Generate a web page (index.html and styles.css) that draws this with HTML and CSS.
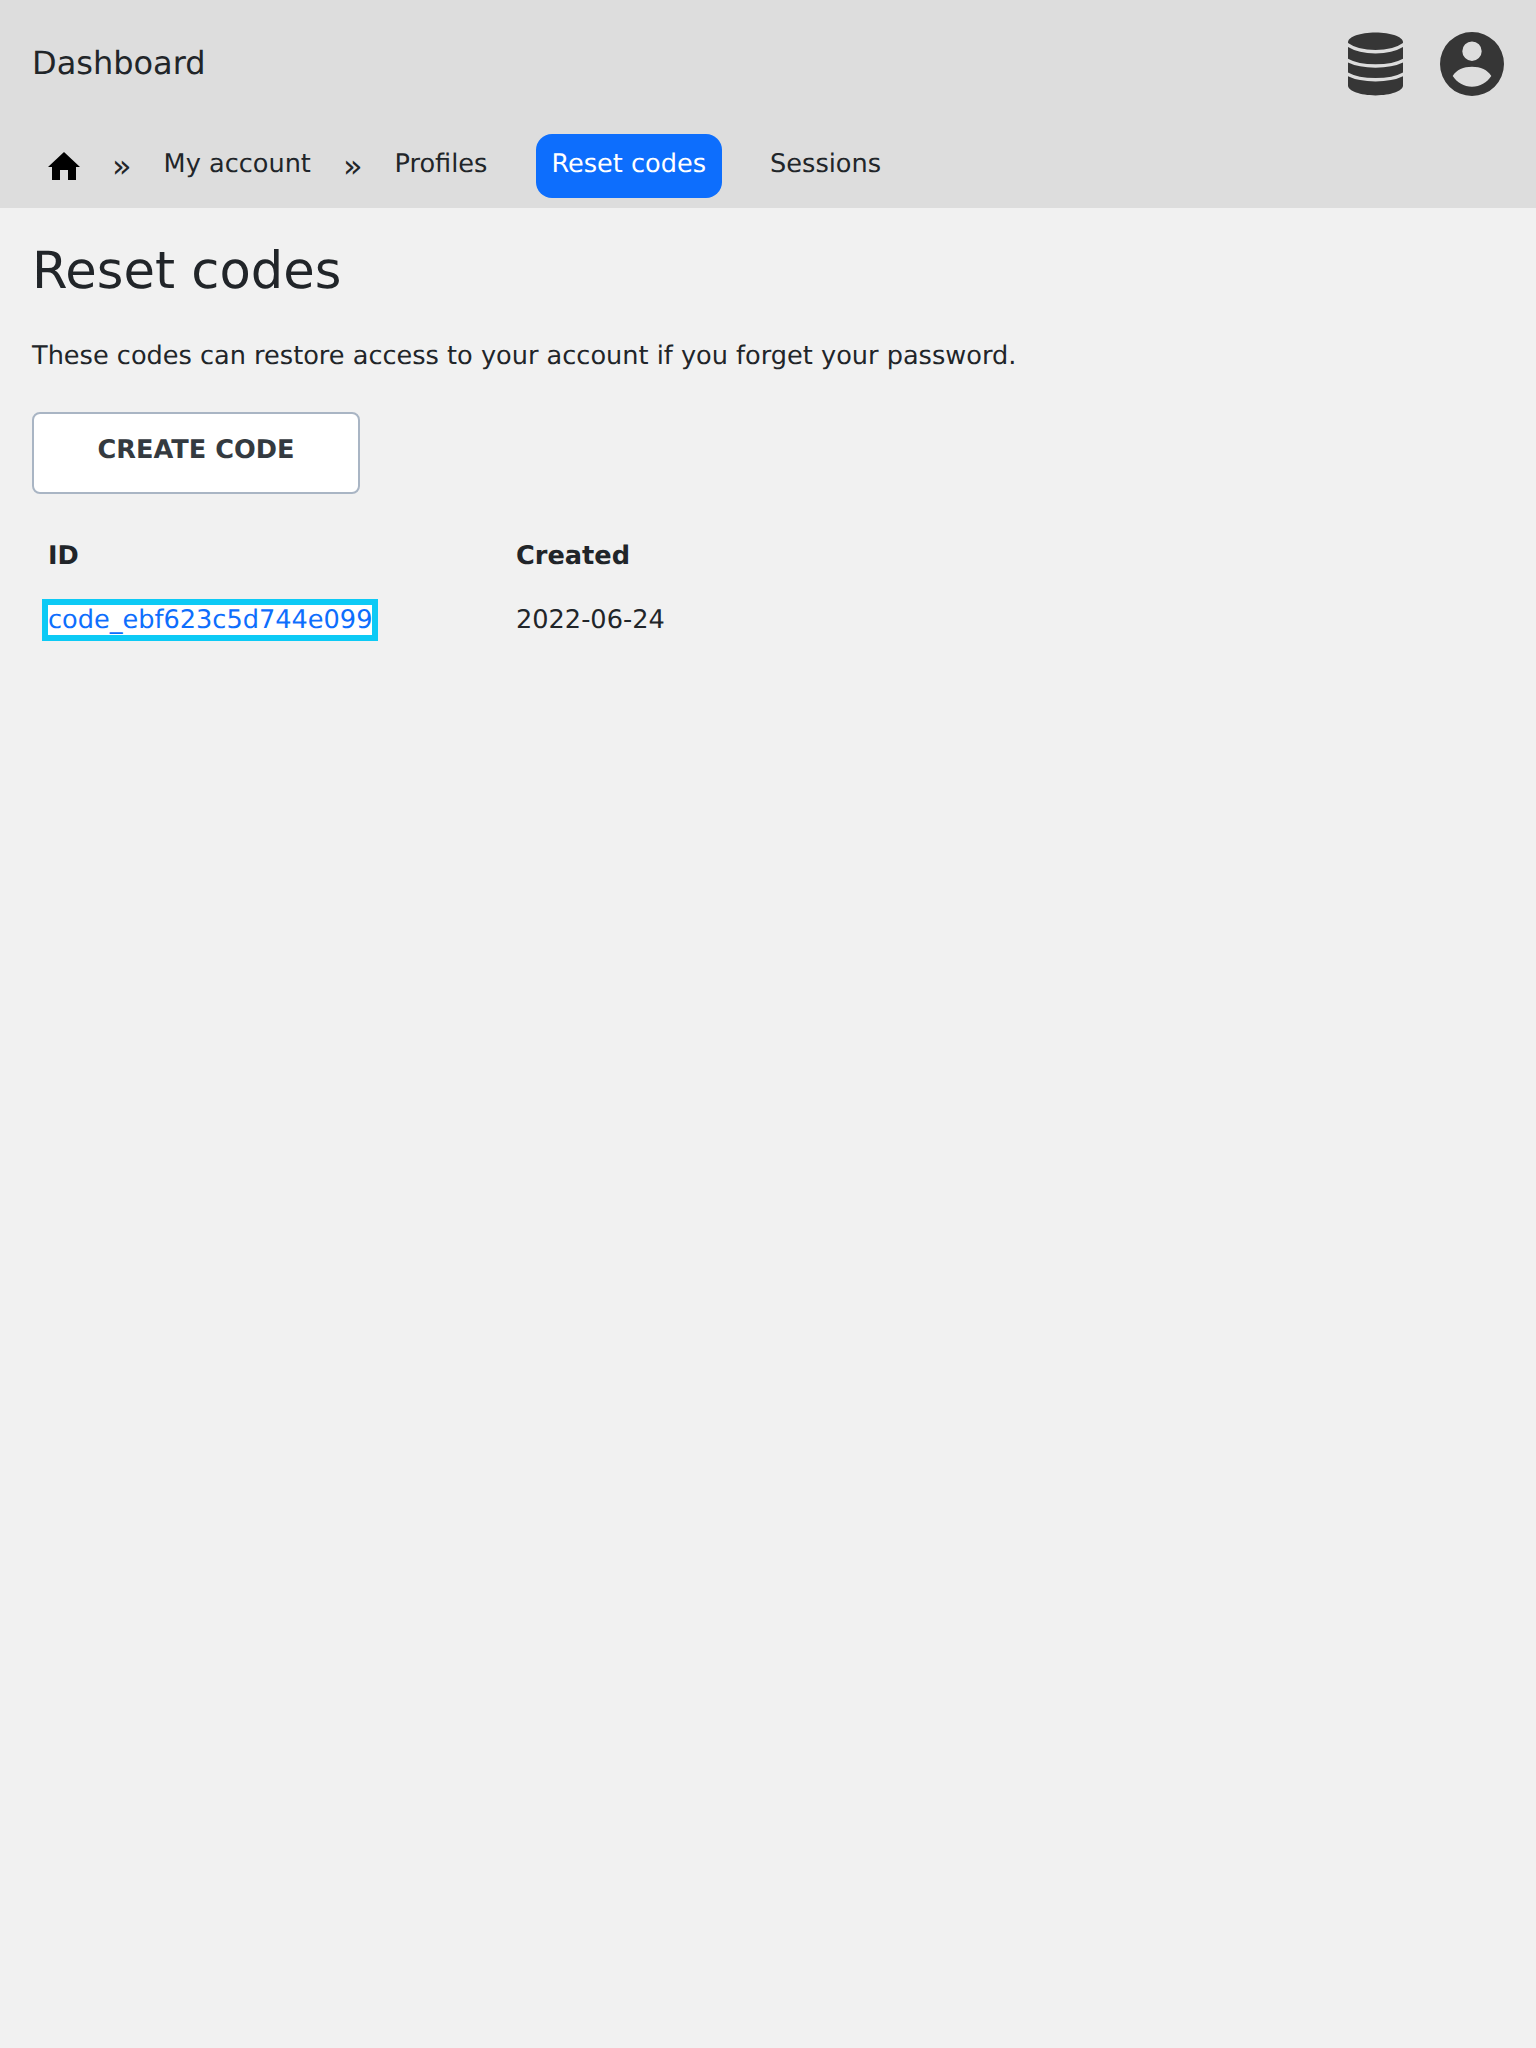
FILE: index.html
```html
<!DOCTYPE html>
<html lang="en">
  <head>
    <meta charset="UTF-8" />
    <meta name="viewport" content="width=device-width, initial-scale=1.0" />
    <title>Reset codes</title>
    <link rel="stylesheet" href="styles.css">
  </head>
  <body>
    <header class="topbar">
      <div class="brand-row">
        <a class="brand" href="#">Dashboard</a>
        <div class="top-icons">
          <svg class="db-icon" viewBox="0 0 56 64" width="55" height="64">
            <path d="M28 0C12.500 0 0 4.400 0 10v44c0 5.600 12.500 10 28 10s28-4.400 28-10V10C56 4.400 43.500 0 28 0z" />
            <path class="gap" d="M-1 12C6 17 17 19.500 28 19.500s22-2.500 29-7.500M-1 28C6 32 17 34 28 34s22-2 29-6M-1 42C6 46 17 48 28 48s22-2 29-6" />
          </svg>
          <svg class="user-icon" viewBox="0 0 64 64" width="64" height="64">
            <path fill-rule="evenodd" d="M32 0a32 32 0 1 1 0 64a32 32 0 0 1 0-64zM32 9.500a9.700 9.700 0 1 0 0 19.400a9.700 9.700 0 0 0 0-19.400zM32 34.700c-8.500 0-15.500 3-19.300 9.300C17 50.500 24 54.700 32 54.700s15-4.200 19.300-10.700C47.500 37.700 40.500 34.700 32 34.700z" />
          </svg>
        </div>
      </div>
      <nav class="crumbs">
        <a class="crumb home" href="#">
          <svg viewBox="0 0 32 28" width="32" height="28"><path d="M16 0 32 15H28V28H20V18H12V28H4V15H0z" /></svg>
        </a>
        <span class="sep">»</span>
        <a class="crumb" href="#">My account</a>
        <span class="sep">»</span>
        <a class="crumb" href="#">Profiles</a>
        <a class="crumb active" href="#">Reset codes</a>
        <a class="crumb" href="#">Sessions</a>
      </nav>
    </header>
    <main class="content">
      <h1>Reset codes</h1>
      <p>These codes can restore access to your account if you forget your password.</p>
      <button class="create-btn">CREATE CODE</button>
      <table class="codes">
        <thead>
          <tr><th>ID</th><th>Created</th></tr>
        </thead>
        <tbody>
          <tr>
            <td><a class="code-link" href="#">code_ebf623c5d744e099</a></td>
            <td>2022-06-24</td>
          </tr>
        </tbody>
      </table>
    </main>
  </body>
</html>
```

FILE: styles.css
```css
body {
  font-family: "DejaVu Sans", sans-serif;
  font-size: 25.6px;
  text-rendering: geometricPrecision;
  background-color: #f1f1f1;
  color: #212529;
  margin: 0;
  padding: 0;
}
a {
  text-decoration: none;
  color: inherit;
}
.topbar {
  background: #dddddd;
  height: 208px;
}
.brand-row {
  display: flex;
  justify-content: space-between;
  align-items: center;
  padding: 32px 32px 0;
  height: 64px;
}
.brand {
  font-size: 32px;
  margin-bottom: 2px;
}
.top-icons {
  display: flex;
  align-items: center;
  gap: 37px;
}
.top-icons svg {
  fill: #363636;
  display: block;
  overflow: hidden;
}
.top-icons .gap {
  fill: none;
  stroke: #dddddd;
  stroke-width: 3.500;
}
.crumbs {
  display: flex;
  align-items: center;
  margin-top: 38px;
  padding-left: 32px;
  height: 64px;
}
.crumb {
  display: block;
  padding: 11px 16px 15px;
  border-radius: 16px;
  line-height: 38px;
}
.crumb.home {
  padding: 0 16px;
}
.crumb.home svg {
  display: block;
  fill: #000;
}
.crumb.active {
  background: #0d6efd;
  color: #fff;
  margin: 0 32px 0 33px;
  padding-left: 15px;
}
.sep {
  font-size: 32px;
  padding: 0 16px;
}
.content {
  padding: 33px 32px 32px;
}
h1 {
  font-size: 51.2px;
  font-weight: 400;
  margin: 0 0 36px;
  line-height: 60px;
}
p {
  margin: 0 0 37px;
  line-height: 38px;
}
.create-btn {
  display: block;
  width: 328px;
  height: 82px;
  background: #fff;
  border: 2px solid #a9b5c4;
  border-radius: 8px;
  color: #343a40;
  font-family: inherit;
  font-size: 25.6px;
  font-weight: 700;
  padding: 0 0 6px;
  text-rendering: geometricPrecision;
}
.codes {
  border-collapse: collapse;
  margin-top: 30px;
}
.codes th {
  text-align: left;
  padding: 12px 16px;
  line-height: 40px;
  width: 436px;
}
.codes td {
  padding: 12px 16px;
  line-height: 40px;
}
.code-link {
  color: #0d6efd;
  outline: 6px solid #0dcaf5;
  background: #fff;
}
```
